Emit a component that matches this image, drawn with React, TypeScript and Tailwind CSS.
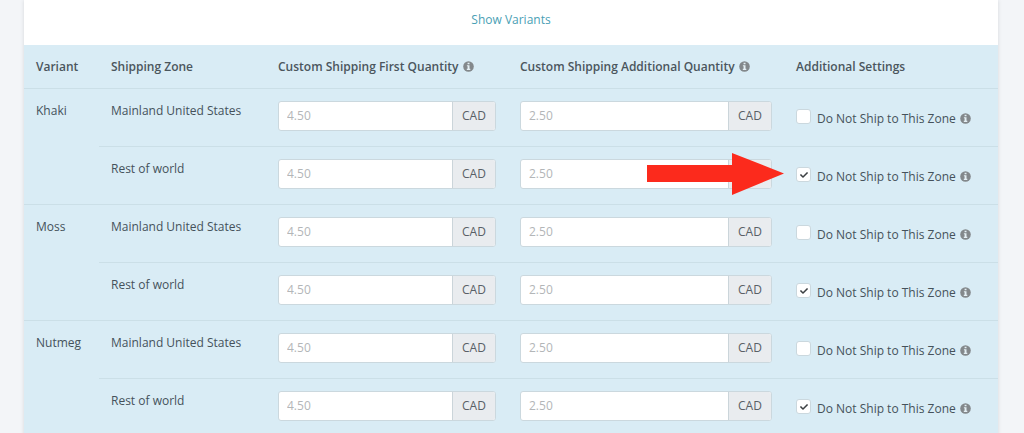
import React, { useState } from 'react';
import { FaCheck } from 'react-icons/fa';

interface ZoneRate {
  name: string;
  first: string;
  additional: string;
  excluded: boolean;
  highlighted?: boolean;
}

interface Variant {
  name: string;
  zones: ZoneRate[];
}

const VARIANTS: Variant[] = [
  {
    name: 'Khaki',
    zones: [
      { name: 'Mainland United States', first: '4.50', additional: '2.50', excluded: false },
      { name: 'Rest of world', first: '4.50', additional: '2.50', excluded: true, highlighted: true },
    ],
  },
  {
    name: 'Moss',
    zones: [
      { name: 'Mainland United States', first: '4.50', additional: '2.50', excluded: false },
      { name: 'Rest of world', first: '4.50', additional: '2.50', excluded: true },
    ],
  },
  {
    name: 'Nutmeg',
    zones: [
      { name: 'Mainland United States', first: '4.50', additional: '2.50', excluded: false },
      { name: 'Rest of world', first: '4.50', additional: '2.50', excluded: true },
    ],
  },
];

const InfoIcon: React.FC = () => (
  <svg viewBox="0 0 11 11" className="size-[11px] shrink-0" aria-hidden="true">
    <circle cx="5.5" cy="5.5" r="5.3" fill="#83888b" />
    <path d="M4.600 1.700H6.500V3.200H4.600ZM3.900 4.200H6.500V7.800H7.300V9H3.800V7.800H4.600V5.300H3.900Z" fill="#e4eff4" />
  </svg>
);

const PriceInput: React.FC<{ label: string; placeholder: string }> = ({ label, placeholder }) => (
  <div className="flex h-[30px] overflow-hidden rounded-[3px] border border-[#cbd8de] bg-white">
    <input
      type="text"
      aria-label={label}
      placeholder={placeholder}
      className="min-w-0 flex-1 px-2 text-xs text-[#45525b] outline-none placeholder:text-[#b3b6b8]"
    />
    <span className="flex w-[43px] items-center justify-center border-l border-[#cbd5da] bg-[#e9ecef] text-xs text-[#596066]">
      CAD
    </span>
  </div>
);

const ExcludeZone: React.FC<{ initial: boolean }> = ({ initial }) => {
  const [checked, setChecked] = useState(initial);

  return (
    <div className="flex items-center gap-1 pt-2">
      <label className="flex items-center gap-1.5 whitespace-nowrap">
        <span className="relative mb-1 size-[15px] shrink-0">
          <input
            type="checkbox"
            checked={checked}
            onChange={e => setChecked(e.target.checked)}
            className="block size-full appearance-none rounded-[3px] border border-[#cbd8de] bg-white"
          />
          {checked && (
            <FaCheck size={8} className="pointer-events-none absolute inset-0 m-auto text-[#3c4043]" />
          )}
        </span>
        Do Not Ship to This Zone
      </label>
      <InfoIcon />
    </div>
  );
};

const Arrow: React.FC = () => (
  <svg
    viewBox="0 0 137 42"
    className="pointer-events-none absolute right-full top-[6px] h-[42px] w-[137px]"
    aria-hidden="true"
  >
    <path d="M0 12H85V0L137 20.500L85 42V29H0Z" fill="#fc2a1c" />
  </svg>
);

export default function App() {
  return (
    <div className="min-h-screen bg-[#f3f5f8] pl-6 pr-[26px] font-['Open_Sans','Noto_Sans',sans-serif] text-xs leading-[19px] text-[#45525b]">
      <div className="bg-white shadow-[0_0_4px_rgba(0,0,0,0.12)]">
        <div className="flex justify-center pb-4 pt-2.5">
          <a href="#variants" className="text-[#4a9fb5]">
            Show Variants
          </a>
        </div>

        <table
          id="variants"
          className="w-full table-fixed border-separate border-spacing-0 bg-[#d9ecf5] text-left"
        >
          <colgroup>
            <col className="w-[75px]" />
            <col className="w-[167px]" />
            <col className="w-[242px]" />
            <col className="w-[276px]" />
            <col className="w-[214px]" />
          </colgroup>
          <thead>
            <tr className="whitespace-nowrap text-[#4b565d]">
              <th className="p-3 font-semibold">Variant</th>
              <th className="p-3 font-semibold">Shipping Zone</th>
              <th className="p-3 font-semibold">
                <span className="flex items-center gap-1">
                  Custom Shipping First Quantity
                  <InfoIcon />
                </span>
              </th>
              <th className="p-3 font-semibold">
                <span className="flex items-center gap-1">
                  Custom Shipping Additional Quantity
                  <InfoIcon />
                </span>
              </th>
              <th className="p-3 font-semibold">Additional Settings</th>
            </tr>
          </thead>
          <tbody>
            {VARIANTS.map(variant =>
              variant.zones.map((zone, idx) => (
                <tr key={`${variant.name}-${zone.name}`} className="align-top">
                  {idx === 0 && (
                    <td rowSpan={variant.zones.length} className="border-t border-[#cbdfe7] px-3 pt-3">
                      {variant.name}
                    </td>
                  )}
                  <td className="border-t border-[#cbdfe7] px-3 pt-3">{zone.name}</td>
                  <td className="border-t border-[#cbdfe7] px-3 pb-[15px] pt-3">
                    <PriceInput
                      label={`${variant.name}, ${zone.name}: first quantity`}
                      placeholder={zone.first}
                    />
                  </td>
                  <td className="border-t border-[#cbdfe7] px-3 pb-[15px] pt-3">
                    <PriceInput
                      label={`${variant.name}, ${zone.name}: additional quantity`}
                      placeholder={zone.additional}
                    />
                  </td>
                  <td className="relative border-t border-[#cbdfe7] px-3 pt-3">
                    <ExcludeZone initial={zone.excluded} />
                    {zone.highlighted && <Arrow />}
                  </td>
                </tr>
              ))
            )}
          </tbody>
        </table>
      </div>
    </div>
  );
}
